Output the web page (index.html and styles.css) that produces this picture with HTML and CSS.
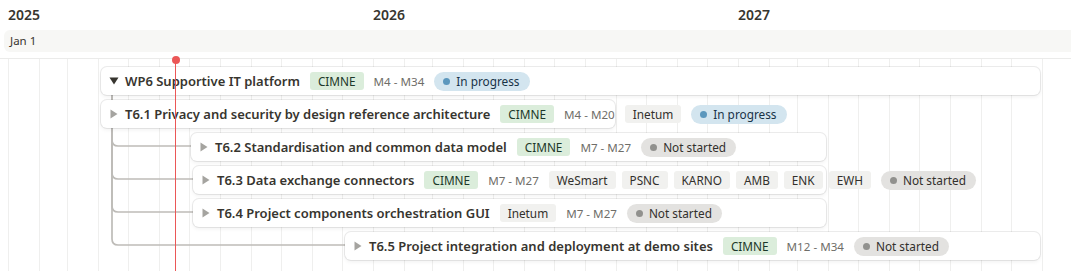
FILE: index.html
```html
<!DOCTYPE html>
<html lang="en">
<head>
    <meta charset="UTF-8">
    <meta name="viewport" content="width=device-width, initial-scale=1.0">
    <title>WP6 Timeline</title>
    <link rel="stylesheet" href="styles.css">
</head>
<body>

<div class="timeline">

    <!-- Year header -->
    <div class="years">
        <div class="year">2025</div>
        <div class="year">2026</div>
        <div class="year">2027</div>
    </div>

    <!-- Day header -->
    <div class="days"><span>Jan 1</span></div>

    <!-- Board: month grid, tree links, today marker and the task bars -->
    <div class="board">
        <div class="months" id="months"></div>

        <svg class="links" width="1071" height="212" viewBox="0 0 1071 212">
            <path d="M112 35 V81 Q112 87 118 87 H191" />
            <path d="M112 35 V114 Q112 120 118 120 H193" />
            <path d="M112 35 V147 Q112 153 118 153 H193" />
            <path d="M112 35 V180 Q112 186 118 186 H345" />
        </svg>

        <div class="today-col"><div class="today"></div></div>

        <div class="rows">
            <div class="row">
                <div class="bar" style="margin-left: 101px; width: 939px;">
                    <span class="head">
                        <svg class="toggle" width="10" height="10" viewBox="0 0 10 10"><path d="M0.5 1.5 H9.5 L5 8.5 Z" fill="#37352f"/></svg>
                        <span class="name">WP6 Supportive IT platform</span>
                    </span>
                    <span class="tag green">CIMNE</span>
                    <span class="dates">M4 - M34</span>
                    <span class="status progress"><i></i>In progress</span>
                </div>
            </div>

            <div class="row">
                <div class="bar" style="margin-left: 101px; width: 514px;">
                    <span class="head">
                        <svg class="toggle" width="10" height="10" viewBox="0 0 10 10"><path d="M1.5 0.5 V9.5 L8.5 5 Z" fill="#a5a4a0"/></svg>
                        <span class="name">T6.1 Privacy and security by design reference architecture</span>
                    </span>
                    <span class="tag green">CIMNE</span>
                    <span class="dates">M4 - M20</span>
                    <span class="tag">Inetum</span>
                    <span class="status progress"><i></i>In progress</span>
                </div>
            </div>

            <div class="row">
                <div class="bar" style="margin-left: 191px; width: 635px;">
                    <span class="head">
                        <svg class="toggle" width="10" height="10" viewBox="0 0 10 10"><path d="M1.5 0.5 V9.5 L8.5 5 Z" fill="#a5a4a0"/></svg>
                        <span class="name">T6.2 Standardisation and common data model</span>
                    </span>
                    <span class="tag green">CIMNE</span>
                    <span class="dates">M7 - M27</span>
                    <span class="status"><i></i>Not started</span>
                </div>
            </div>

            <div class="row">
                <div class="bar" style="margin-left: 193px; width: 633px;">
                    <span class="head">
                        <svg class="toggle" width="10" height="10" viewBox="0 0 10 10"><path d="M1.5 0.5 V9.5 L8.5 5 Z" fill="#a5a4a0"/></svg>
                        <span class="name">T6.3 Data exchange connectors</span>
                    </span>
                    <span class="tag green">CIMNE</span>
                    <span class="dates">M7 - M27</span>
                    <span class="tag">WeSmart</span>
                    <span class="tag">PSNC</span>
                    <span class="tag">KARNO</span>
                    <span class="tag">AMB</span>
                    <span class="tag">ENK</span>
                    <span class="tag">EWH</span>
                    <span class="status"><i></i>Not started</span>
                </div>
            </div>

            <div class="row">
                <div class="bar" style="margin-left: 193px; width: 633px;">
                    <span class="head">
                        <svg class="toggle" width="10" height="10" viewBox="0 0 10 10"><path d="M1.5 0.5 V9.5 L8.5 5 Z" fill="#a5a4a0"/></svg>
                        <span class="name">T6.4 Project components orchestration GUI</span>
                    </span>
                    <span class="tag">Inetum</span>
                    <span class="dates">M7 - M27</span>
                    <span class="status"><i></i>Not started</span>
                </div>
            </div>

            <div class="row">
                <div class="bar" style="margin-left: 345px; width: 695px;">
                    <span class="head">
                        <svg class="toggle" width="10" height="10" viewBox="0 0 10 10"><path d="M1.5 0.5 V9.5 L8.5 5 Z" fill="#a5a4a0"/></svg>
                        <span class="name">T6.5 Project integration and deployment at demo sites</span>
                    </span>
                    <span class="tag green">CIMNE</span>
                    <span class="dates">M12 - M34</span>
                    <span class="status"><i></i>Not started</span>
                </div>
            </div>
        </div>
    </div>
</div>

<script>
    // Build one column per month, 1px per day, starting Jan 1 2025
    const monthDays = [31, 28, 31, 30, 31, 30, 31, 31, 30, 31, 30, 31];
    const monthsEl = document.getElementById('months');

    for (let year = 2025; year <= 2027; year++) {
        monthDays.forEach(days => {
            const col = document.createElement('div');
            col.className = 'month';
            col.style.width = days + 'px';
            monthsEl.appendChild(col);
        });
    }
</script>

</body>
</html>
```

FILE: styles.css
```css
/* General Reset */
* {
    margin: 0;
    padding: 0;
    box-sizing: border-box;
}

body {
    font-family: 'Noto Sans', 'Open Sans', sans-serif;
    background-color: #fff;
    color: #37352f;
}

.timeline {
    width: 1071px;
    height: 271px;
    overflow: hidden;
    display: flex;
    flex-direction: column;
}

/* Headers */
.years {
    display: flex;
    height: 30px;
    padding-left: 8px;
}

.year {
    flex: 0 0 365px;
    font-size: 14px;
    font-weight: 600;
    line-height: 30px;
}

.days {
    height: 22px;
    margin-left: 4px;
    padding-left: 6px;
    background-color: #f7f7f5;
    border-radius: 6px 0 0 6px;
    font-size: 11.5px;
    line-height: 22px;
    color: #37352f;
}

/* Board */
.board {
    flex: 1;
    margin-top: 6px;
    border-top: 1px solid #ebebea;
    display: grid;
    grid-template-columns: 1071px;
}

.board > * {
    grid-area: 1 / 1;
}

.months {
    display: flex;
    padding-left: 8px;
}

.month {
    flex-shrink: 0;
    border-left: 1px solid #efefee;
}

.links path {
    fill: none;
    stroke: #bebcb8;
    stroke-width: 1.7;
}

.today-col {
    padding-left: 175px;
}

.today {
    position: relative;
    width: 1px;
    height: 100%;
    background-color: #eb5757;
}

.today::before {
    content: "";
    position: absolute;
    left: -3.5px;
    top: -3.5px;
    width: 8px;
    height: 8px;
    border-radius: 50%;
    background-color: #eb5757;
}

/* Task rows */
.rows {
    padding-top: 8px;
}

.row {
    height: 33px;
}

.bar {
    height: 28px;
    display: flex;
    align-items: center;
    gap: 10px;
    padding-left: 8px;
    background-color: #fff;
    border-radius: 6px;
    box-shadow: 0 0 0 1px rgba(15, 15, 15, 0.08), 0 2px 4px rgba(15, 15, 15, 0.06);
    white-space: nowrap;
}

.bar > * {
    flex-shrink: 0;
}

.head {
    display: flex;
    align-items: center;
    gap: 6px;
}

.toggle {
    display: block;
}

.name {
    font-size: 13px;
    font-weight: 600;
    color: #37352f;
}

.tag {
    height: 18px;
    padding: 0 8px;
    border-radius: 3px;
    background-color: #f1f1ef;
    color: #32302c;
    font-size: 11.8px;
    line-height: 18px;
}

/* tags of the same property sit closer together */
.tag + .tag {
    margin-left: -4px;
}

.tag.green {
    background-color: #dbeddb;
    color: #1c3829;
}

.dates {
    font-size: 11.6px;
    color: #6f6e69;
}

.status {
    display: flex;
    align-items: center;
    gap: 6px;
    height: 19px;
    padding: 0 10px 0 9px;
    border-radius: 10px;
    background-color: #e3e2e0;
    color: #32302c;
    font-size: 11.8px;
}

.status i {
    width: 7px;
    height: 7px;
    border-radius: 50%;
    background-color: #91918e;
}

.status.progress {
    background-color: #d3e5ef;
    color: #183347;
}

.status.progress i {
    background-color: #5b97bd;
}
```
